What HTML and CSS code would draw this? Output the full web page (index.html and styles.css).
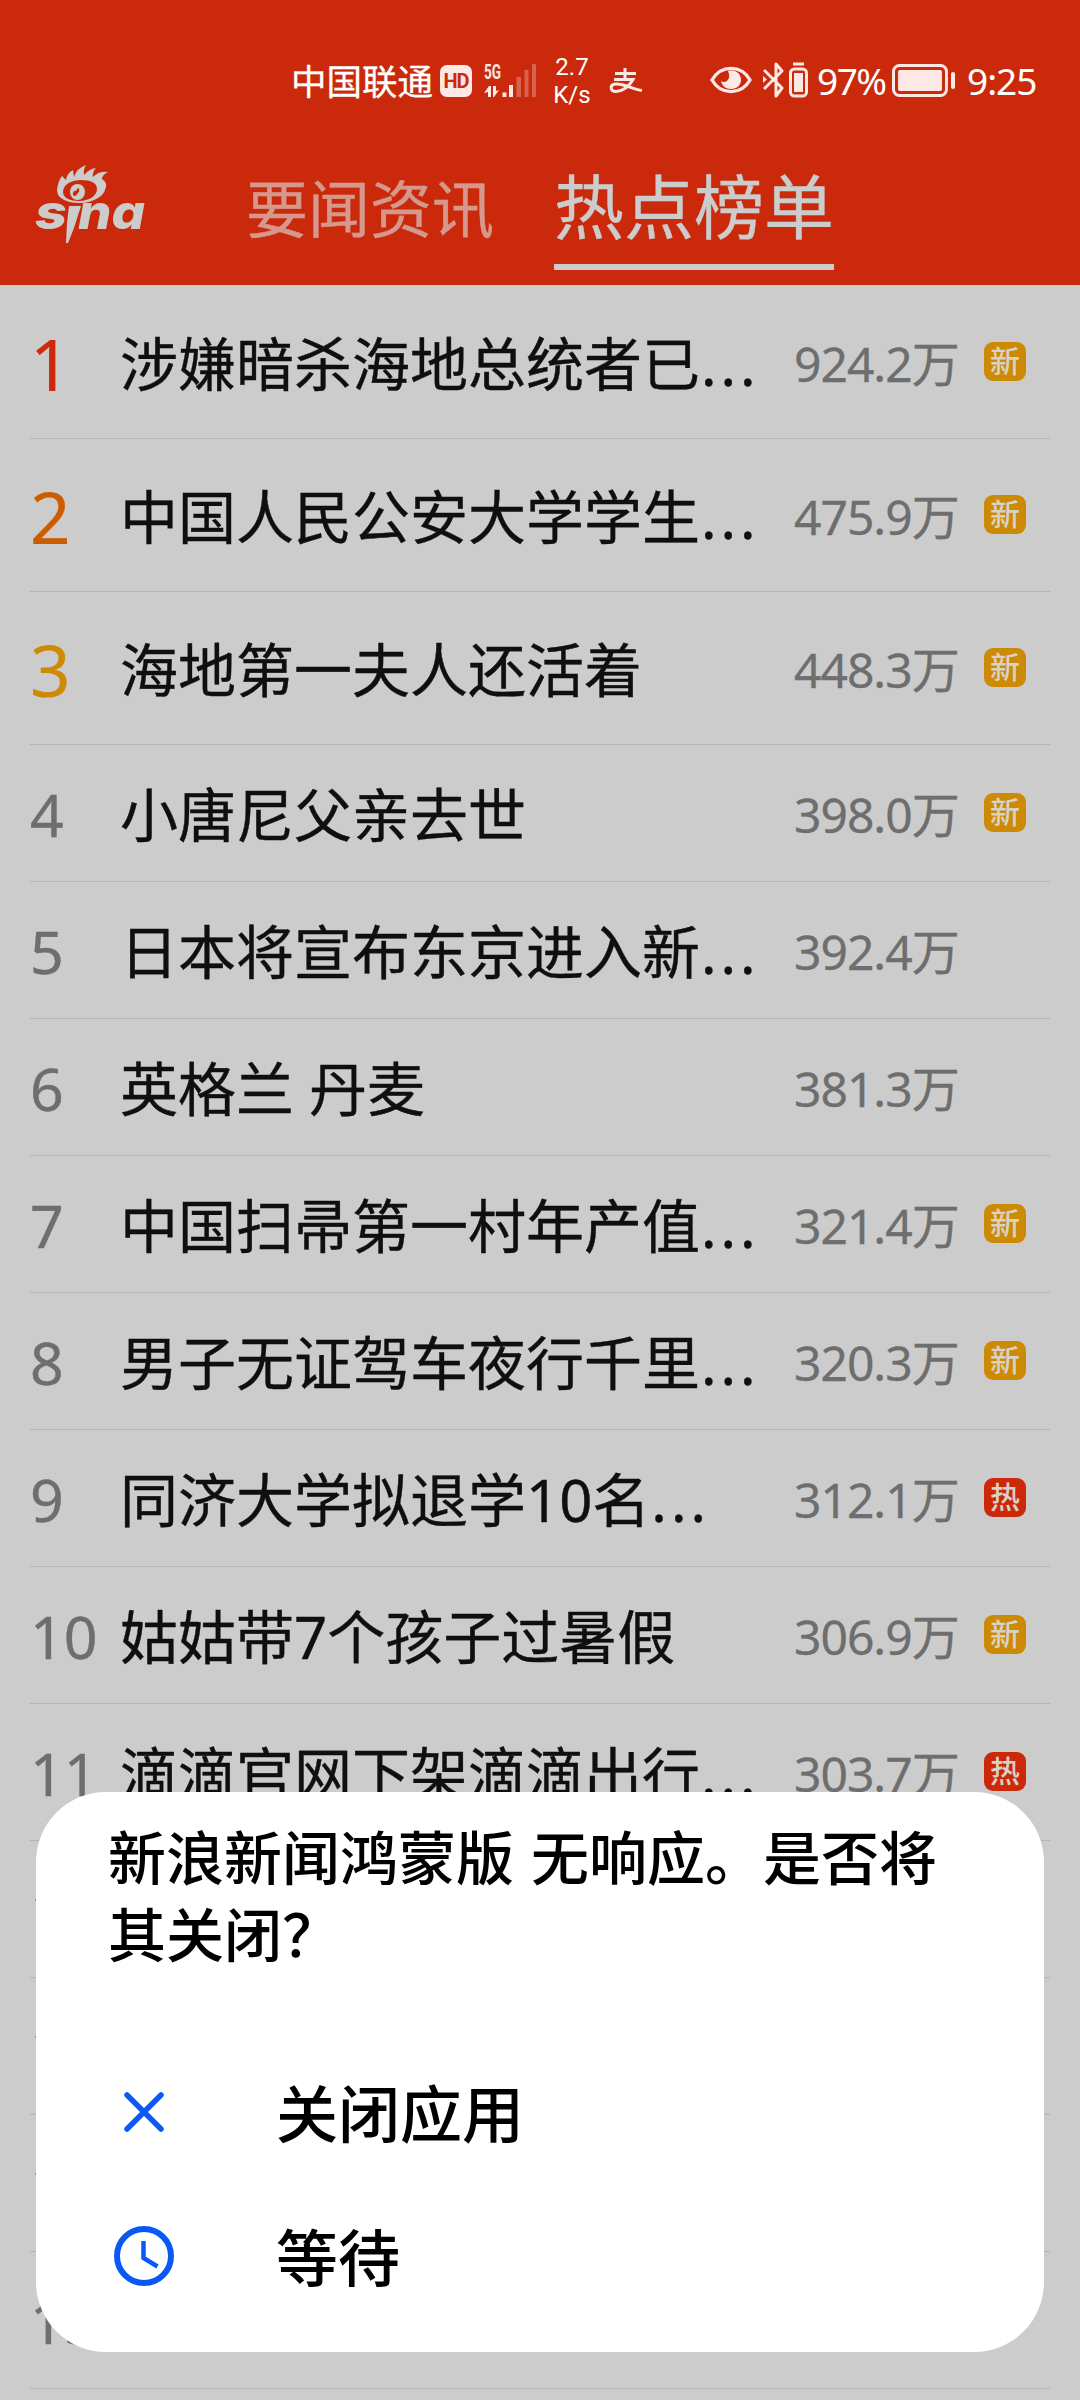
FILE: index.html
```html
<!DOCTYPE html>
<html lang="zh-CN">
<head>
<meta charset="utf-8">
<title>热点榜单</title>
<link rel="stylesheet" href="styles.css">
</head>
<body>
<div class="screen">
  <header class="header">
    <div class="status">
      <span class="carrier">中国联通</span>
      <span class="hd">HD</span>
      <svg class="signal" width="54" height="44" viewBox="0 -4 54 44">
        <text class="net" x="0" y="16" textLength="17" lengthAdjust="spacingAndGlyphs">5G</text>
        <path fill="#fde8e5" d="M0 30 5 23h2v11H4v-5zM9 23h3v5l3-1-5 7H9zM18.500 29.500h4V34h-4zM25 22h4v12h-4z"/>
        <path fill="#fff" fill-opacity=".27" d="M32.500 14h4.500v20h-4.500zM40.500 7h4v27h-4zM48 1h4v33h-4z"/>
      </svg>
      <span class="speed"><span>2.7</span><span>K/s</span></span>
      <svg class="pay" width="34" height="28" viewBox="0 0 34 28" fill="none" stroke="#fde8e5" stroke-width="3">
        <path d="M6 6.500h21M16 1v10M5 12.500h19C20 20 13 24.500 7 24.500c-6 0-7-7 0-7.500 8-.5 16 5 26 6.500"/>
      </svg>
      <svg class="eye" width="42" height="28" viewBox="0 0 42 28">
        <path d="M2 14C11-1.500 31-1.500 40 14 31 29.500 11 29.500 2 14z" fill="none" stroke="#fde8e5" stroke-width="3.400"/>
        <path d="M18 5c8-2 13 3 13 9 0 5-4 9-10 9-5 0-9-3-10-8 4 3 11-1 7-10z" fill="#fde8e5"/>
      </svg>
      <svg class="bt" width="46" height="36" viewBox="0 0 46 36" fill="none" stroke="#fde8e5">
        <path d="M1 8l18 18-6 8V2l6 7L1 27" stroke-width="3" stroke-linejoin="round"/>
        <path d="M0 14v7l4-3.500z" fill="#fde8e5" stroke="none"/>
        <rect x="27.500" y="7" width="16" height="27" rx="4" stroke-width="3"/>
        <path d="M30 2h11" stroke-width="3"/>
        <rect x="31" y="11" width="9" height="19" fill="#fde8e5" stroke="none"/>
      </svg>
      <span class="pct">97%</span>
      <svg class="batt" width="64" height="34" viewBox="0 0 64 34">
        <rect x="1.500" y="1.500" width="53" height="30" rx="6" fill="none" stroke="#fde8e5" stroke-width="3"/>
        <rect x="6" y="6" width="44" height="21" rx="2" fill="#fde8e5"/>
        <rect x="59" y="8" width="4" height="17" rx="2" fill="#fde8e5"/>
      </svg>
      <span class="clock">9:25</span>
    </div>
    <nav class="nav">
      <svg class="logo" width="112" height="82" viewBox="0 0 112 82">
        <path fill="#ccc" d="M22 28Q23 19 27 14L31 18Q32 11 38 8L39 15Q42 6 51 3Q48 8 49 13Q54 7 61 6Q57 10 58 15Q64 9 73 10Q67 13 67 17Q72 20 71 25Q69 33 63 36Q55 41 45 41Q32 41 26 36Q22 33 22 28z"/>
        <path fill="#ca2a0b" d="M28 30c0-8 9-12 18-12 10 0 16 3 16 9 0 7-8 12-18 12-9 0-16-3-16-9z"/>
        <ellipse cx="42.500" cy="30" rx="7.500" ry="8" fill="#ccc"/>
        <path fill="#ca2a0b" d="M38 31q1-3 3-2l1-2 2-1q1 3-1 5-3 5-5 2z"/>
        <text class="word" x="0" y="67" textLength="32" lengthAdjust="spacingAndGlyphs">s</text>
        <path fill="#ccc" d="M34 44h12L39 66 33 81h-2l1-20z"/>
        <text class="word" x="43" y="67" textLength="67" lengthAdjust="spacingAndGlyphs">na</text>
      </svg>
      <span class="tab">要闻资讯</span>
      <span class="tab active">热点榜单</span>
    </nav>
  </header>
  <main class="list">
    <div class="row top"><span class="rank r1">1</span><span class="title">涉嫌暗杀海地总统者已<i>...</i></span><span class="count">924.2万</span><span class="badge">新</span></div>
    <div class="row top"><span class="rank r2">2</span><span class="title">中国人民公安大学学生<i>...</i></span><span class="count">475.9万</span><span class="badge">新</span></div>
    <div class="row top"><span class="rank r3">3</span><span class="title">海地第一夫人还活着</span><span class="count">448.3万</span><span class="badge">新</span></div>
    <div class="row"><span class="rank">4</span><span class="title">小唐尼父亲去世</span><span class="count">398.0万</span><span class="badge">新</span></div>
    <div class="row"><span class="rank">5</span><span class="title">日本将宣布东京进入新<i>...</i></span><span class="count">392.4万</span></div>
    <div class="row"><span class="rank">6</span><span class="title">英格兰 丹麦</span><span class="count">381.3万</span></div>
    <div class="row"><span class="rank">7</span><span class="title">中国扫帚第一村年产值<i>...</i></span><span class="count">321.4万</span><span class="badge">新</span></div>
    <div class="row"><span class="rank">8</span><span class="title">男子无证驾车夜行千里<i>...</i></span><span class="count">320.3万</span><span class="badge">新</span></div>
    <div class="row"><span class="rank">9</span><span class="title">同济大学拟退学10名<i>...</i></span><span class="count">312.1万</span><span class="badge hot">热</span></div>
    <div class="row"><span class="rank">10</span><span class="title">姑姑带7个孩子过暑假</span><span class="count">306.9万</span><span class="badge">新</span></div>
    <div class="row"><span class="rank">11</span><span class="title">滴滴官网下架滴滴出行<i>...</i></span><span class="count">303.7万</span><span class="badge hot">热</span></div>
    <div class="row"><span class="rank">12</span></div>
    <div class="row"><span class="rank">13</span></div>
    <div class="row"><span class="rank">14</span></div>
    <div class="row"><span class="rank">15</span></div>
  </main>
  <section class="dialog">
    <p class="message">新浪新闻鸿蒙版 无响应。是否将其关闭？</p>
    <div class="option">
      <svg width="60" height="60" viewBox="0 0 60 60" fill="none" stroke="#0b59f5" stroke-width="5.500" stroke-linecap="round"><path d="M13 13l34 34M47 13 13 47"/></svg>
      <span>关闭应用</span>
    </div>
    <div class="option">
      <svg width="60" height="60" viewBox="0 0 60 60" fill="none" stroke="#0b59f5"><circle cx="30" cy="30" r="27" stroke-width="6"/><path d="M29.500 15v17L43.500 40.500" stroke-width="4.500"/></svg>
      <span>等待</span>
    </div>
  </section>
</div>
</body>
</html>
```
FILE: styles.css
```css
* { box-sizing: border-box; }
body { margin: 0; }
.screen {
  position: relative;
  width: 1080px;
  height: 2400px;
  overflow: hidden;
  background: #ccc;
  font-family: "Noto Sans", "Noto Sans CJK SC", sans-serif;
  color: #0f0f0f;
}
.header { height: 285px; background: #ca2a0b; }
.status {
  display: flex;
  align-items: center;
  height: 161px;
  padding-left: 291px;
  color: #fff;
  white-space: nowrap;
}
.status > * { flex: none; }
.carrier { width: 149px; font-size: 35.500px; line-height: 40px; -webkit-text-stroke: .3px; }
.hd {
  width: 32px;
  height: 32px;
  border-radius: 7px;
  background: #fde8e5;
  color: #ca2a0b;
  font: 700 20px/33px Roboto, sans-serif;
  text-align: center;
  letter-spacing: -1px;
}
.signal { margin-left: 12px; overflow: visible; }
.net { font: 700 21px Roboto, sans-serif; fill: #fde8e5; }
.speed {
  display: flex;
  flex-direction: column;
  width: 40px;
  margin-left: 14px;
  font: 24px/28px Roboto, sans-serif;
  text-align: center;
}
.pay { margin-left: 17px; }
.eye { margin: 0 0 2px 67px; }
.bt { margin: 0 0 2px 11px; }
.pct { width: 75px; margin-left: 8px; font-size: 37px; letter-spacing: -1.500px; }
.batt { margin-left: 0; }
.clock { margin-left: 11px; font-size: 37px; letter-spacing: -1px; }
.nav { display: flex; height: 124px; padding-left: 35px; }
.logo { margin-top: 1px; }
.word { font: italic 800 48px Inter, sans-serif; fill: #ccc; }
.tab {
  height: 111px;
  margin: -2px 0 0 99px;
  font-size: 62px;
  line-height: 100px;
  color: #d6988c;
  -webkit-text-stroke: .4px;
}
.tab.active {
  margin-left: 60px;
  font-size: 70px;
  line-height: 96px;
  color: #ccc;
  border-bottom: 6px solid #ccc;
}
.list { padding: 1px 30px 0; }
.row {
  display: flex;
  align-items: center;
  height: 137px;
  border-bottom: 1px solid #b5b5b5;
  white-space: nowrap;
}
.row.top { height: 153px; }
.rank {
  width: 90px;
  padding-top: 2px;
  font-size: 59px;
  line-height: 80px;
  color: #6e6e6e;
  -webkit-text-stroke: .4px;
}
.top .rank { padding-top: 3px; font-size: 71px; -webkit-text-stroke: .2px; }
.rank.r1 { color: #cc2a0b; }
.rank.r2 { color: #cc5c00; }
.rank.r3 { color: #cc8a05; }
.title { width: 674px; padding-top: 3px; font-size: 58px; line-height: 80px; -webkit-text-stroke: .4px; }
.title i { margin-left: 1px; font-style: normal; letter-spacing: 4px; }
.count { width: 190px; padding-top: 3px; font-size: 48px; line-height: 80px; letter-spacing: -1px; color: #6e6e6e; -webkit-text-stroke: .3px; }
.badge {
  width: 42px;
  height: 39px;
  margin-bottom: 2px;
  border-radius: 9px;
  background: #cc8a05;
  color: #d8d2c4;
  font-size: 30px;
  font-weight: 500;
  line-height: 38px;
  text-align: center;
}
.badge.hot { background: #cc290b; }
.dialog {
  position: absolute;
  left: 36px;
  top: 1792px;
  width: 1008px;
  height: 560px;
  padding: 27px 72px 0;
  border-radius: 70px;
  background: #fff;
  color: #000;
  font-weight: 500;
}
.message { margin: 0 0 67px; font-size: 58px; line-height: 77px; word-spacing: 2px; }
.option {
  display: flex;
  align-items: center;
  height: 144px;
  padding-left: 6px;
  font-size: 62px;
}
.option span { margin: -2px 0 0 102px; }
```
